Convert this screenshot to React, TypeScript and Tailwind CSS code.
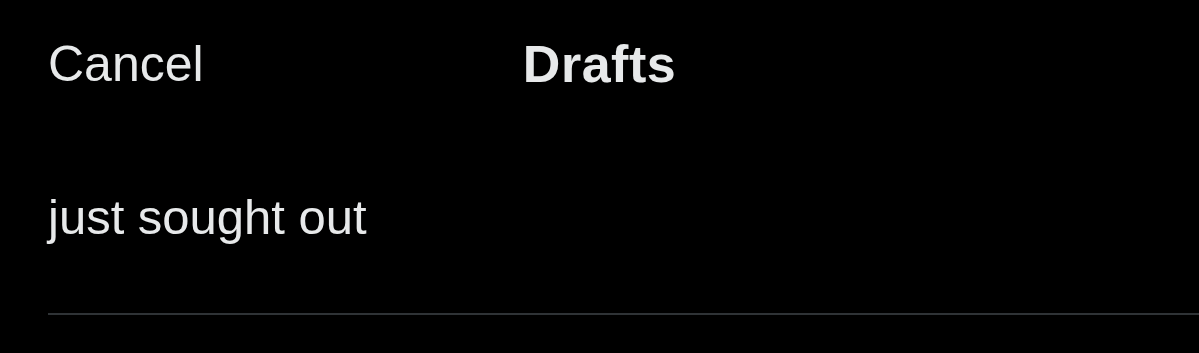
export default function App() {
  return (
    <main
      className="h-[353px] w-full overflow-hidden bg-black text-[#e7e9ea]"
      style={{ fontFamily: '"Liberation Sans", Arial, sans-serif' }}
    >
      <header className="relative flex h-[128px] items-center px-[48px]">
        <button className="text-[50px] leading-none text-[#e7e9ea]">Cancel</button>
        <h1 className="pointer-events-none absolute inset-x-0 text-center text-[52px] font-bold leading-none tracking-[0.5px]">
          Drafts
        </h1>
      </header>

      <section className="pl-[48px]">
        <div className="flex h-[187px] items-center border-b-2 border-[#2f3336] pb-[6px]">
          <p className="text-[49px] leading-none">just sought out</p>
        </div>
      </section>
    </main>
  );
}
